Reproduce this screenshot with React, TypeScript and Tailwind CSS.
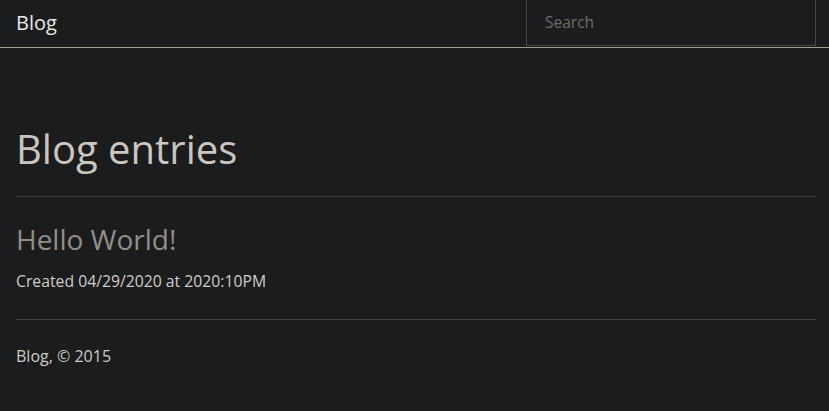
export default function App() {
  return (
    <div className="min-h-[411px] w-full bg-[#1b1c1e] text-[#d0ccc6]" style={{ fontFamily: '"Open Sans", "Noto Sans", sans-serif' }}>
      <nav className="flex h-[48px] items-stretch justify-between border-b border-[#a09c98] pl-4 pr-[13px]">
        <a className="mt-[9px] text-[20px] leading-[28px] text-[#ece9e5]">Blog</a>
        <div className="mt-[-2px] mb-[1px] flex w-[290px] items-center border border-[#45474a] pl-[18px] pt-[2px]">
          <span className="text-[15.5px] text-[#6f6c69]">Search</span>
        </div>
      </nav>
      <main className="pl-4 pr-[13px]">
        <h1 className="mt-[77px] text-[40px] leading-[48px] text-[#cac5be]">Blog entries</h1>
        <hr className="mt-[23px] border-[#3c3e41]" />
        <h2 className="mt-[24px] text-[28px] leading-[36px] text-[#938e88]">Hello World!</h2>
        <p className="mt-[13px] text-[15.75px] leading-[22px] text-[#d0ccc6]">Created 04/29/2020 at 2020:10PM</p>
        <hr className="mt-[27px] border-[#3c3e41]" />
        <footer className="mt-[25px] text-[16px] leading-[22px] text-[#d0ccc6]">Blog, © 2015</footer>
      </main>
    </div>
  );
}
